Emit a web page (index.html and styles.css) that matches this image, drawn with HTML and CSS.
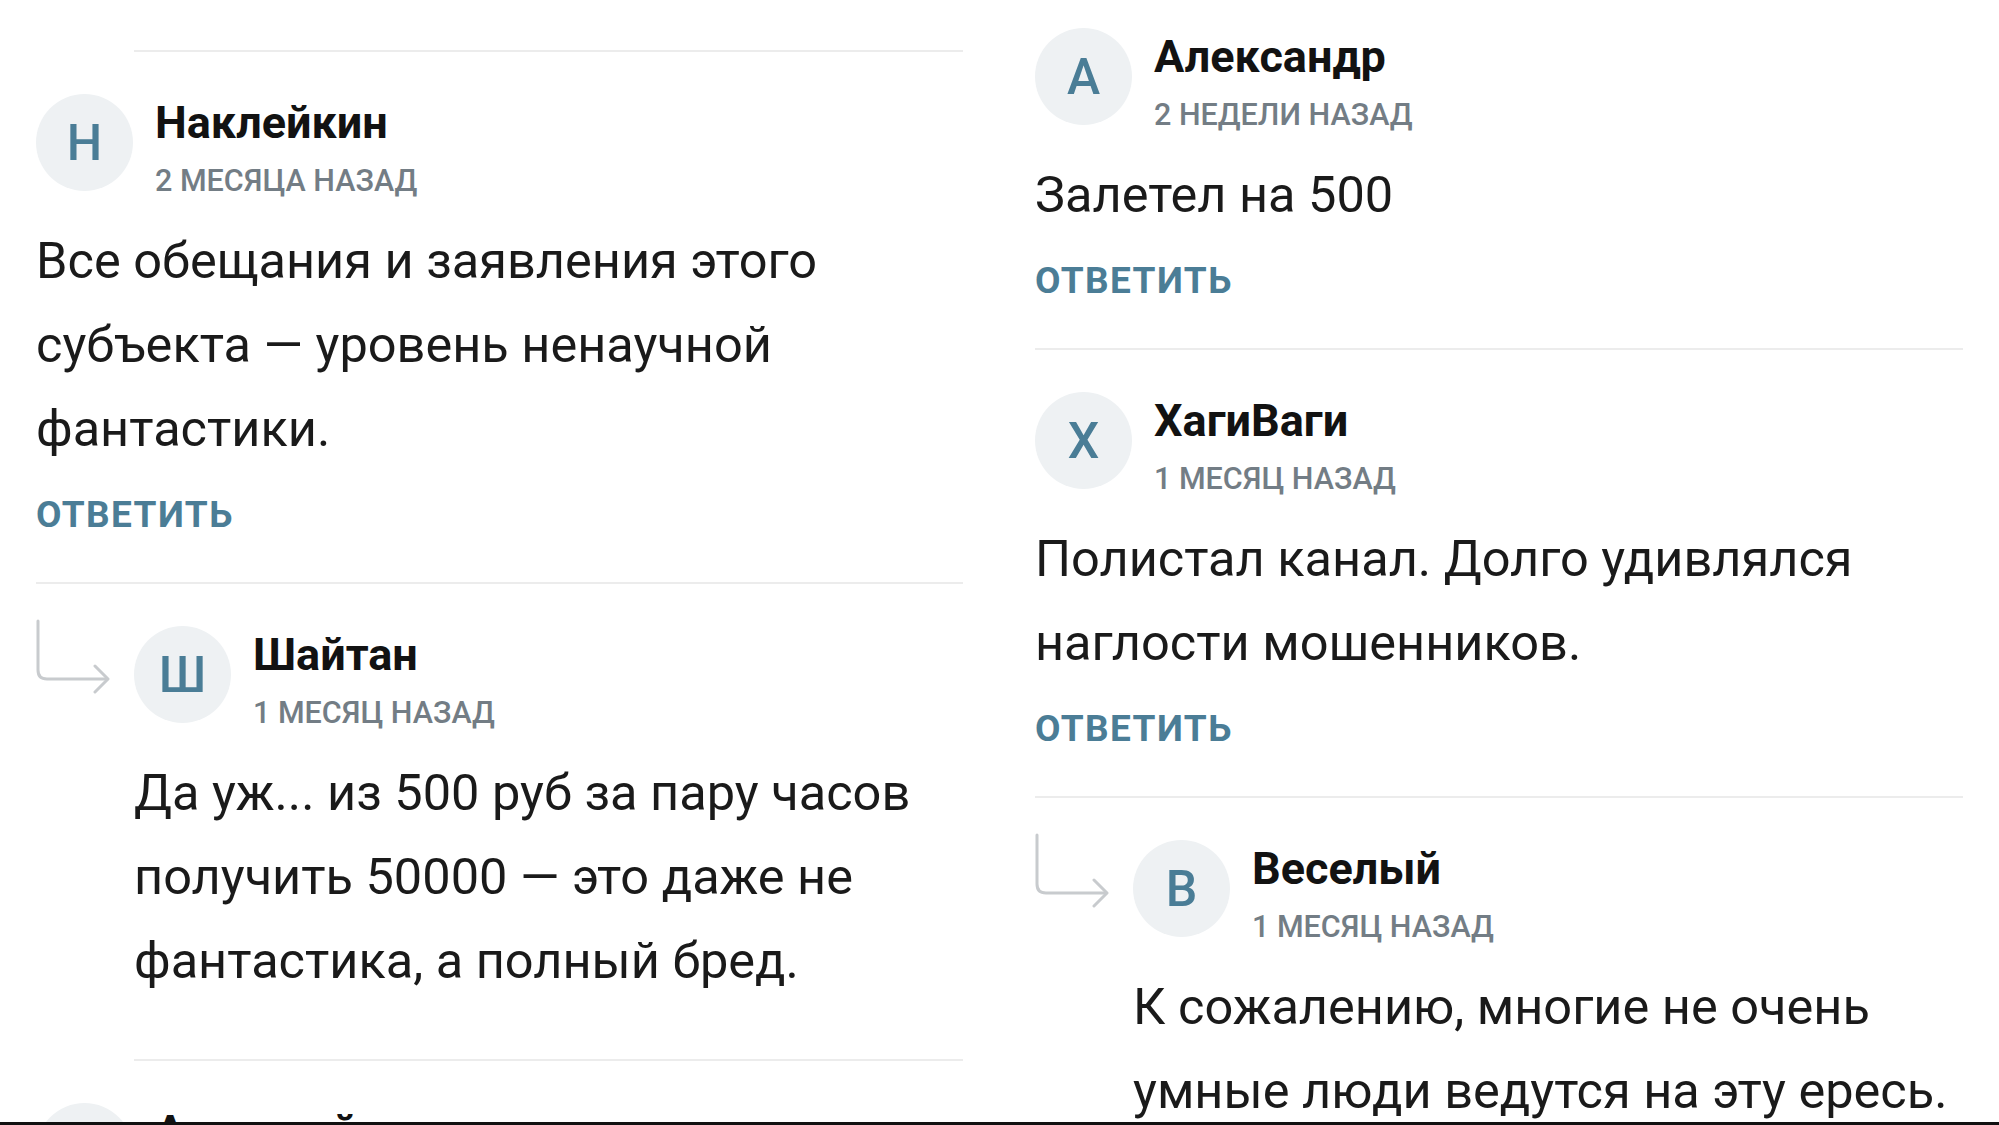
FILE: index.html
```html
<!DOCTYPE html>
<html lang="ru">
  <head>
    <meta charset="UTF-8" />
    <meta name="viewport" content="width=device-width, initial-scale=1.0" />
    <title>Комментарии</title>
    <link rel="stylesheet" href="styles.css">
  </head>
  <body>
    <main class="feed">
      <section class="column">
        <div class="comment-tail"></div>

        <article class="comment">
          <div class="comment-main">
            <header class="comment-head">
              <div class="avatar">Н</div>
              <div class="meta">
                <div class="author">Наклейкин</div>
                <div class="time">2 месяца назад</div>
              </div>
            </header>
            <p class="comment-text">Все обещания и заявления этого субъекта — уровень ненаучной фантастики.</p>
            <a class="reply-link" href="#">Ответить</a>
          </div>
        </article>

        <article class="comment comment--reply">
          <svg class="reply-arrow" viewBox="0 0 74 77" width="74" height="77">
            <path d="M2 2 V51 Q2 60 11 60 H71" />
            <path d="M59 47 L72 60 L59 73" />
          </svg>
          <div class="comment-main">
            <header class="comment-head">
              <div class="avatar">Ш</div>
              <div class="meta">
                <div class="author">Шайтан</div>
                <div class="time">1 месяц назад</div>
              </div>
            </header>
            <p class="comment-text">Да уж... из 500 руб за пару часов получить 50000 — это даже не фантастика, а полный бред.</p>
          </div>
        </article>

        <article class="comment">
          <div class="comment-main">
            <header class="comment-head">
              <div class="avatar">А</div>
              <div class="meta">
                <div class="author">Анатолий</div>
                <div class="time">1 месяц назад</div>
              </div>
            </header>
          </div>
        </article>
      </section>

      <section class="column column--shifted">
        <article class="comment">
          <div class="comment-main">
            <header class="comment-head">
              <div class="avatar">А</div>
              <div class="meta">
                <div class="author">Александр</div>
                <div class="time">2 недели назад</div>
              </div>
            </header>
            <p class="comment-text">Залетел на 500</p>
            <a class="reply-link" href="#">Ответить</a>
          </div>
        </article>

        <article class="comment">
          <div class="comment-main">
            <header class="comment-head">
              <div class="avatar">Х</div>
              <div class="meta">
                <div class="author">ХагиВаги</div>
                <div class="time">1 месяц назад</div>
              </div>
            </header>
            <p class="comment-text">Полистал канал. Долго удивлялся наглости мошенников.</p>
            <a class="reply-link" href="#">Ответить</a>
          </div>
        </article>

        <article class="comment comment--reply">
          <svg class="reply-arrow" viewBox="0 0 74 77" width="74" height="77">
            <path d="M2 2 V51 Q2 60 11 60 H71" />
            <path d="M59 47 L72 60 L59 73" />
          </svg>
          <div class="comment-main">
            <header class="comment-head">
              <div class="avatar">В</div>
              <div class="meta">
                <div class="author">Веселый</div>
                <div class="time">1 месяц назад</div>
              </div>
            </header>
            <p class="comment-text">К сожалению, многие не очень умные люди ведутся на эту ересь.</p>
          </div>
        </article>
      </section>
    </main>
    <div class="screen-edge"></div>
  </body>
</html>
```

FILE: styles.css
```css
*,
*::after,
*::before {
  box-sizing: border-box;
}

body {
  margin: 0;
  height: 1125px;
  overflow: hidden;
  display: flex;
  flex-direction: column;
  background-color: #fff;
  font-family: Roboto, "Noto Sans", sans-serif;
  color: #1a1a1a;
}

.feed {
  flex: 1;
  overflow: hidden;
  display: grid;
  grid-template-columns: 927px 928px;
  column-gap: 72px;
  padding: 0 36px;
  align-items: start;
}

.column--shifted {
  margin-top: -14px; /* el comentario anterior queda fuera de la pantalla */
}

/* final del comentario (respuesta) que queda arriba */
.comment-tail {
  height: 52px;
  margin-left: 98px;
  border-bottom: 2px solid #ececec;
}

.comment {
  display: flex;
}

.comment-main {
  flex: 1;
  min-width: 0;
  padding: 42px 0 42px;
  border-bottom: 2px solid #ececec;
}

.comment--reply .comment-main {
  padding-bottom: 56px;
}

.reply-arrow {
  flex: none;
  margin: 35px 24px 0 0;
  fill: none;
  stroke: #c8cbce;
  stroke-width: 3;
  stroke-linecap: round;
  stroke-linejoin: round;
}

.comment-head {
  display: flex;
  align-items: flex-start;
  gap: 22px;
}

.avatar {
  flex: none;
  width: 97px;
  height: 97px;
  border-radius: 50%;
  background-color: #eef1f3;
  color: #4a7d96;
  font-size: 50px;
  font-weight: 500;
  display: flex;
  align-items: center;
  justify-content: center;
}

.author {
  font-size: 45px;
  line-height: 58px;
  font-weight: 700;
  color: #121212;
}

.time {
  font-size: 30.5px;
  line-height: 57px;
  font-weight: 500;
  text-transform: uppercase;
  color: #737d85;
}

.comment-text {
  margin: 10px 0 0;
  font-size: 50.5px;
  line-height: 84px;
}

.reply-link {
  display: block;
  margin-top: 19px;
  font-size: 37px;
  line-height: 50px;
  font-weight: 700;
  letter-spacing: 1.4px;
  text-transform: uppercase;
  text-decoration: none;
  color: #4b7d96;
}

.screen-edge {
  height: 3px;
  background-color: #111;
}
```
